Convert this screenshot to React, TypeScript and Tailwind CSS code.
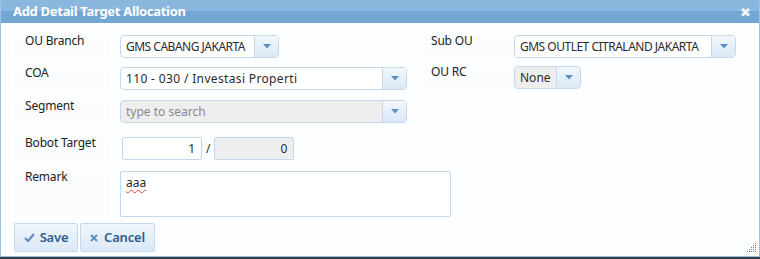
import React from "react";

const font = { fontFamily: '"Noto Sans", "Open Sans", "DejaVu Sans", sans-serif' };

function Arrow() {
  return (
    <svg width="8" height="5" viewBox="0 0 8 5">
      <path d="M0 0 H8 L4 4.5 Z" fill="#5b8fc7" />
    </svg>
  );
}

function DropBtn() {
  return (
    <div className="flex h-full w-[24px] shrink-0 items-center justify-center border-l border-[#c5d9ee] bg-gradient-to-b from-[#f2f7fc] to-[#dae8f6]">
      <Arrow />
    </div>
  );
}

function Select({ text, w, grey, placeholder, track }: { text: string; w: string; grey?: boolean; placeholder?: boolean; track?: string }) {
  return (
    <div className={`flex h-[23px] ${w} overflow-hidden rounded-[4px] border border-[#c5d9ee] ${grey ? "bg-[#eeeeee]" : "bg-white"}`}>
      <div className={`flex flex-1 items-center overflow-hidden whitespace-nowrap pl-[5px] text-[12px] ${track ?? ""} ${placeholder ? "text-[#888]" : "text-[#2b2b2b]"}`}>{text}</div>
      <DropBtn />
    </div>
  );
}

function Label({ children }: { children: React.ReactNode }) {
  return <div className="w-[95px] shrink-0 whitespace-nowrap bg-[#fbfcfd] pl-[11px] text-[12px] leading-[12px] tracking-[-0.2px] text-[#222]">{children}</div>;
}

export default function App() {
  return (
    <div className="h-[259px] w-[760px] bg-[#3a3d40]" style={font}>
      <div className="flex h-[257px] w-[760px] flex-col border-x border-b border-[#9ec2e3] bg-[#fdfeff]">
        <div className="relative flex h-[23px] items-center pl-[12px]">
          <div className="absolute inset-0 flex flex-col">
            <div className="h-[11px] bg-[#8ab7dd]" />
            <div className="flex-1 bg-[#72a6d3]" />
          </div>
          <span className="relative text-[13px] font-bold tracking-[-0.3px] text-white">Add Detail Target Allocation</span>
          <span className="absolute right-[8px] top-[3px] text-[13px] font-bold text-[#eef4fa]">✖</span>
        </div>

        <div className="relative flex flex-1 flex-col pl-[13px]">
          <div className="mt-[12px] flex">
            <div className="flex w-[406px] flex-col">
              <div className="flex h-[23px]">
                <Label>OU Branch</Label>
                <div className="ml-[11px]">
                  <Select text="GMS CABANG JAKARTA" w="w-[159px]" track="tracking-[-0.5px]" />
                </div>
              </div>
              <div className="mt-[9px] flex h-[23px]">
                <Label>COA</Label>
                <div className="ml-[11px]">
                  <Select text="110 - 030 / Investasi Properti" w="w-[287px]" track="tracking-[0.35px]" />
                </div>
              </div>
            </div>
            <div className="flex flex-col">
              <div className="flex h-[23px]">
                <Label>Sub OU</Label>
                <div className="ml-[-1px]">
                  <Select text="GMS OUTLET CITRALAND JAKARTA" w="w-[222px]" track="tracking-[-0.5px]" />
                </div>
              </div>
              <div className="mt-[8px] flex h-[23px]">
                <Label>OU RC</Label>
                <div className="ml-[-1px]">
                  <Select text="None" w="w-[67px]" grey />
                </div>
              </div>
            </div>
          </div>

          <div className="mt-[10px] flex h-[23px]">
            <Label>Segment</Label>
            <div className="ml-[11px]">
              <Select text="type to search" w="w-[287px]" grey placeholder />
            </div>
          </div>

          <div className="mt-[14px] flex h-[23px]">
            <Label>Bobot Target</Label>
            <div className="ml-[13px] flex items-start">
              <div className="flex h-[23px] w-[80px] items-center justify-end rounded-[2px] border border-[#c5d9ee] bg-white pr-[6px] text-[12px] text-[#2b2b2b]">1</div>
              <span className="mx-[4px] mt-[3px] text-[12px] text-[#2b2b2b]">/</span>
              <div className="flex h-[23px] w-[80px] items-center justify-end rounded-[2px] border border-[#c5d9ee] bg-[#eeeeee] pr-[6px] text-[12px] text-[#2b2b2b]">0</div>
            </div>
          </div>

          <div className="mt-[11px] flex h-[46px]">
            <Label>Remark</Label>
            <div className="ml-[11px] h-[46px] w-[331px] rounded-[2px] border border-[#c5d9ee] bg-white pl-[5px] pt-[2px] text-[12px] text-[#2b2b2b]">
              <span className="underline decoration-wavy decoration-[#e04040] decoration-1 underline-offset-2">aaa</span>
            </div>
          </div>

          <div className="mt-[6px] flex gap-[2px]">
            <button className="flex h-[29px] w-[64px] items-center justify-center gap-[5px] rounded-[2px] border border-[#c5d9ee] bg-gradient-to-b from-[#f0f6fc] to-[#dbe8f6] text-[13px] font-semibold tracking-[-0.2px] text-[#2d5d8e]" style={font}>
              <svg width="11" height="9" viewBox="0 0 11 9">
                <path d="M1 5 L4 8 L10 1" stroke="#5b8fc7" strokeWidth="2.2" fill="none" />
              </svg>
              Save
            </button>
            <button className="flex h-[29px] w-[75px] items-center justify-center gap-[6px] rounded-[2px] border border-[#c5d9ee] bg-gradient-to-b from-[#f0f6fc] to-[#dbe8f6] text-[13px] font-semibold tracking-[-0.2px] text-[#2d5d8e]" style={font}>
              <svg width="8" height="8" viewBox="0 0 8 8">
                <path d="M1 1 L7 7 M7 1 L1 7" stroke="#5b8fc7" strokeWidth="2" />
              </svg>
              Cancel
            </button>
          </div>

          <svg className="absolute bottom-[4px] right-[3px]" width="9" height="9" viewBox="0 0 9 9">
            {[
              [8, 0], [6, 2], [8, 2], [4, 4], [6, 4], [8, 4], [2, 6], [4, 6], [6, 6], [8, 6], [0, 8], [2, 8], [4, 8], [6, 8], [8, 8],
            ].map(([x, y], i) => (
              <rect key={i} x={x} y={y} width="1" height="1" fill="#4a86d0" />
            ))}
          </svg>
        </div>
      </div>
    </div>
  );
}
